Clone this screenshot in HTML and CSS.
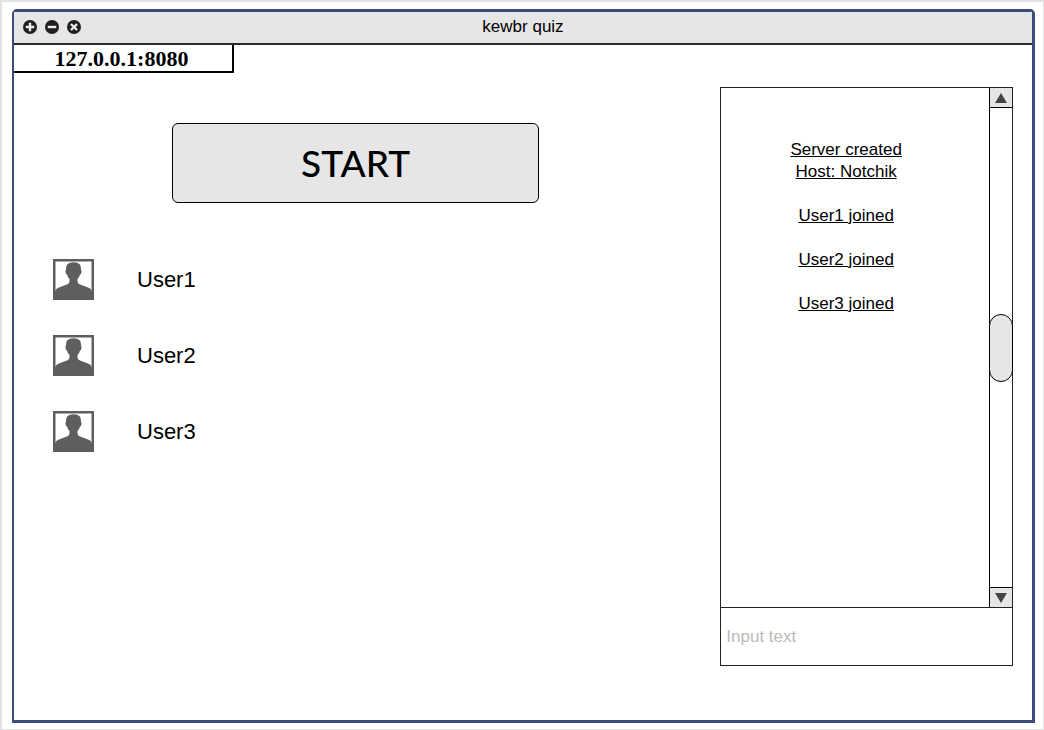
FILE: index.html
```html
<!DOCTYPE html>
<html lang="en">
<head>
<meta charset="utf-8">
<title>kewbr quiz</title>
<link rel="stylesheet" href="styles.css">
</head>
<body>
<svg width="0" height="0" class="sprite" aria-hidden="true">
  <symbol id="avatar" viewBox="0 0 41 41">
    <rect width="41" height="41" fill="#5e5e5e"/>
    <rect x="2.500" y="2.500" width="36" height="36" fill="#fff"/>
    <path fill="#5e5e5e" d="M2 39V33Q2.500 29.500 6 28.500Q11 26.500 14 25.500Q16.500 24.500 16.500 22.500V20Q14.500 18 14 15.500Q12.500 15 12.500 12.500Q12.500 11 13 10.500Q12 3.500 20.500 3.200Q29 3.500 28 10.500Q28.500 11 28.500 12.500Q28.500 15 27 15.500Q26.500 18 24.500 20V22.500Q24.500 24.500 27 25.500Q30 26.500 35 28.500Q38.500 29.500 39 33V39Z"/>
  </symbol>
</svg>
<div class="window">
  <header class="titlebar">
    <div class="controls">
      <button class="control" aria-label="Maximize"><svg viewBox="0 0 14 14"><circle cx="7" cy="7" r="7" fill="#231f20"/><path d="M7 2.800v8.400M2.800 7h8.400" stroke="#eee" stroke-width="2.400"/></svg></button>
      <button class="control" aria-label="Minimize"><svg viewBox="0 0 14 14"><circle cx="7" cy="7" r="7" fill="#231f20"/><path d="M2.800 7h8.400" stroke="#eee" stroke-width="2.400"/></svg></button>
      <button class="control" aria-label="Close"><svg viewBox="0 0 14 14"><circle cx="7" cy="7" r="7" fill="#231f20"/><path d="M4 4l6 6M10 4l-6 6" stroke="#eee" stroke-width="2.400"/></svg></button>
    </div>
    <h1 class="title">kewbr quiz</h1>
  </header>
  <main class="content">
    <section class="lobby">
      <div class="address">127.0.0.1:8080</div>
      <button class="start">START</button>
      <ul class="users">
        <li class="user"><svg class="avatar" aria-hidden="true"><use href="#avatar"/></svg><span>User1</span></li>
        <li class="user"><svg class="avatar" aria-hidden="true"><use href="#avatar"/></svg><span>User2</span></li>
        <li class="user"><svg class="avatar" aria-hidden="true"><use href="#avatar"/></svg><span>User3</span></li>
      </ul>
    </section>
    <aside class="chat">
      <div class="log">
        <div class="messages">
          <p>Server created<br>Host: Notchik</p>
          <p>User1 joined</p>
          <p>User2 joined</p>
          <p>User3 joined</p>
        </div>
        <div class="scrollbar">
          <button class="arrow up" aria-label="Scroll up"><svg viewBox="0 0 12 10"><path d="M6 0l6 10H0z" fill="#444"/></svg></button>
          <div class="track"><div class="thumb"></div></div>
          <button class="arrow down" aria-label="Scroll down"><svg viewBox="0 0 12 10"><path d="M6 10l6-10H0z" fill="#444"/></svg></button>
        </div>
      </div>
      <input class="message-input" type="text" placeholder="Input text" aria-label="Message">
    </aside>
  </main>
</div>
</body>
</html>
```
FILE: styles.css
```css
* {
  box-sizing: border-box;
}

body {
  margin: 0;
  min-height: 100vh;
  display: flex;
  padding: 7px 8px 6px 10px;
  border: 2px solid #e3e3e3;
  border-width: 2px 1px 1px 2px;
  background: #fff;
  color: #000;
  font-family: "Liberation Sans", Arial, sans-serif;
  font-size: 17px;
}

.sprite {
  position: absolute;
}

button {
  margin: 0;
  padding: 0;
  border: 0;
  color: inherit;
}

.window {
  flex: 1;
  display: flex;
  flex-direction: column;
  border: 3px solid #3c4c7c;
  border-left-width: 2px;
  border-radius: 5px 5px 0 0;
}

.titlebar {
  display: grid;
  grid-template-columns: 1fr auto 1fr;
  align-items: center;
  height: 33px;
  padding: 0 9px 2px;
  background: #e6e6e6;
  border-bottom: 2px solid #2b2b2b;
}

.controls {
  display: flex;
  gap: 8px;
}

.control {
  width: 14px;
  height: 14px;
  background: none;
}

.control svg {
  display: block;
}

.title {
  margin: 0;
  font-size: 17px;
  font-weight: 400;
}

.content {
  flex: 1;
  display: grid;
  grid-template-columns: 1fr 29.3%;
  padding-right: 19px;
}

.lobby {
  display: flex;
  flex-direction: column;
}

.address {
  width: 220px;
  height: 28px;
  padding-right: 3px;
  border: solid #000;
  border-width: 0 2px 2px 0;
  font: bold 22px/27px "Liberation Serif", "Times New Roman", serif;
  text-align: center;
}

.start {
  width: 52%;
  height: 80px;
  margin: 50px 0 0 158px;
  border: 1px solid #000;
  border-radius: 6px;
  background: #e6e6e6;
  font: 500 37px/44px Lato, sans-serif;
}

.users {
  display: flex;
  flex-direction: column;
  gap: 35px;
  margin: 56px 0 0 39px;
  padding: 0;
  list-style: none;
  font-size: 22px;
}

.user {
  display: flex;
  align-items: center;
  gap: 43px;
}

.avatar {
  width: 41px;
  height: 41px;
}

.chat {
  display: flex;
  flex-direction: column;
  margin: 42px 0 54px;
}

.log {
  flex: 1;
  display: flex;
  border: 1px solid #222;
}

.messages {
  flex: 1;
  padding: 51px 18px 0 0;
  text-align: center;
  text-decoration: underline;
  line-height: 22px;
}

.messages p {
  margin: 0 0 22px;
}

.scrollbar {
  display: flex;
  flex-direction: column;
  width: 23px;
  border-left: 1px solid #000;
}

.arrow {
  display: grid;
  place-items: center;
  height: 20px;
  background: #e6e6e6;
}

.arrow svg {
  width: 12px;
  height: 10px;
}

.up {
  border-bottom: 1px solid #000;
}

.down {
  border-top: 1px solid #000;
}

.track {
  flex: 1;
  padding-top: 206px;
}

.thumb {
  height: 68px;
  margin: 0 -1px;
  border: 1px solid #000;
  border-radius: 12px;
  background: #e6e6e6;
}

.message-input {
  width: 100%;
  height: 58px;
  padding: 0 5px;
  border: 1px solid #222;
  border-top: 0;
  border-radius: 0;
  background: #fff;
  color: #000;
  font: inherit;
}

.message-input::placeholder {
  color: #bbb;
  opacity: 1;
}
```
